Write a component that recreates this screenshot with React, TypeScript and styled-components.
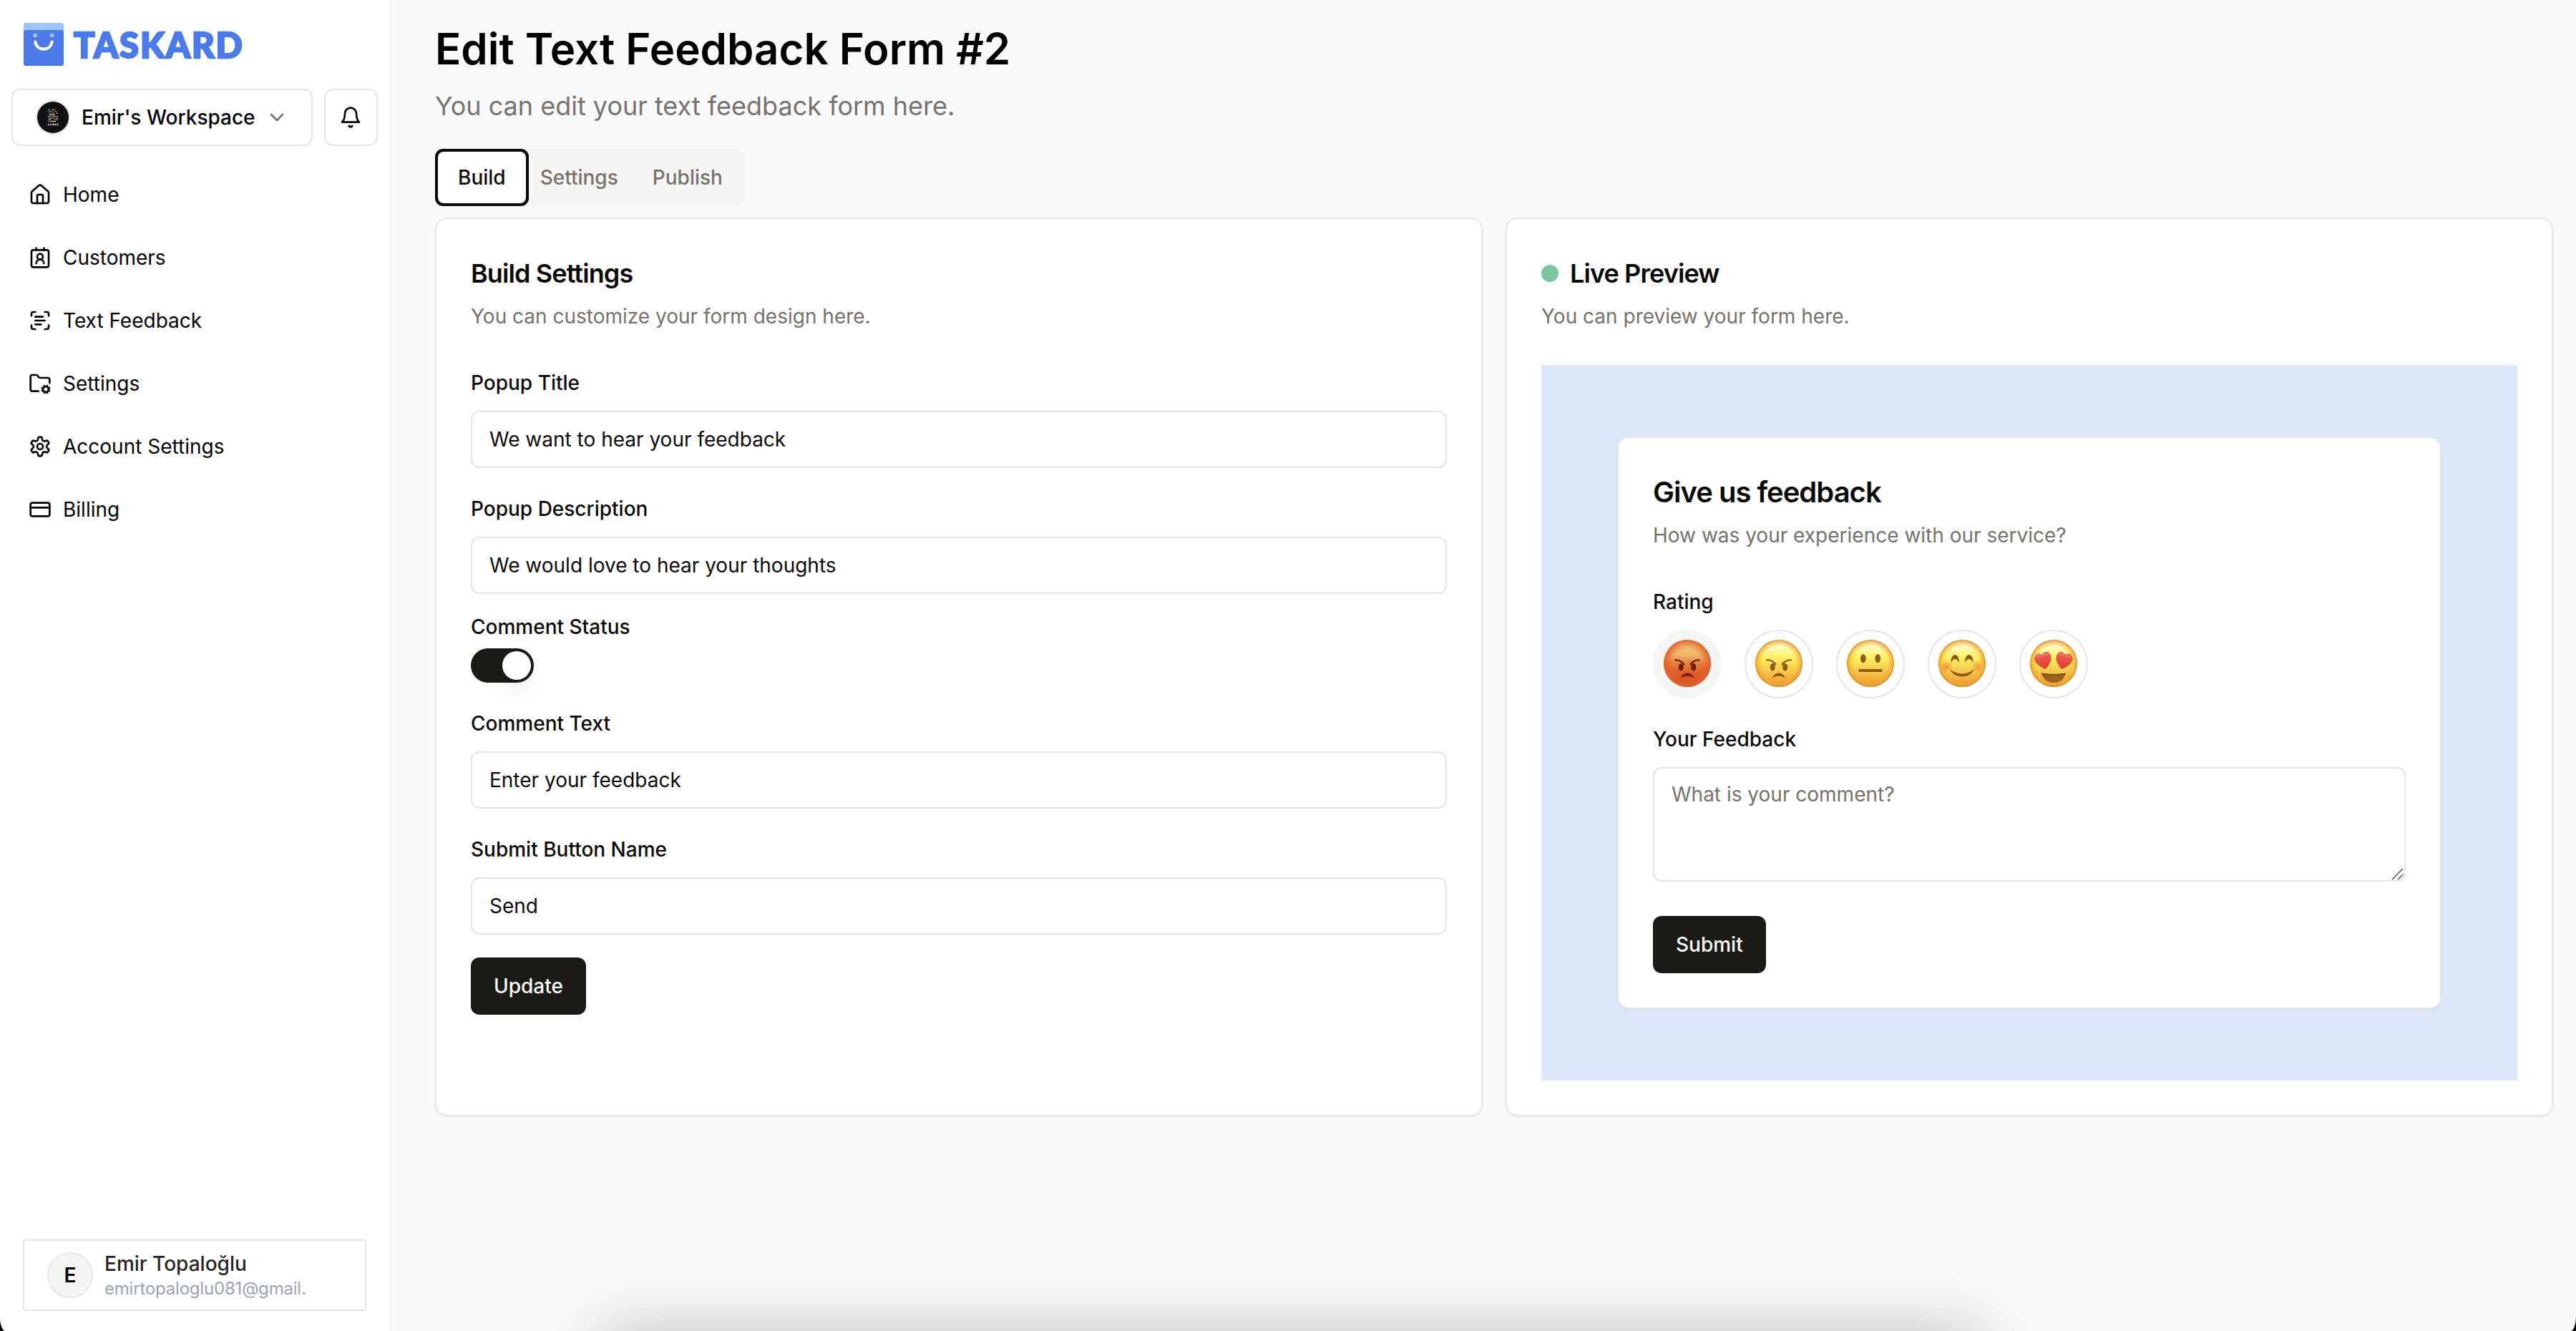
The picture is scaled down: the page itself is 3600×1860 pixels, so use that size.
import React, { useState } from "react";
import styled, { createGlobalStyle, css } from "styled-components";
import { ChevronDown, CreditCard, FolderCog, House, ScanText } from "lucide-react";

const GlobalStyle = createGlobalStyle`
  * {
    box-sizing: border-box;
  }

  body {
    margin: 0;
    background: #000;
    font-family: Inter, "Liberation Sans", sans-serif;
    color: #0c0a09;
  }

  h1, h2, p {
    margin: 0;
  }

  button, input, textarea {
    font-family: inherit;
  }
`;

const Page = styled.div`
  position: relative;
  display: flex;
  height: 1860px;
  overflow: hidden;
  background: #f9fafc;
  border-radius: 0 0 8px 8px / 0 0 20px 20px;
`;

/* Sidebar */

const Sidebar = styled.aside`
  display: flex;
  flex-direction: column;
  width: 546px;
  padding: 32px 16px 28px;
  background: #fff;
  border-right: 2px solid #f3f4f6;
`;

const Logo = styled.div`
  display: flex;
  align-items: center;
  gap: 14px;
  height: 60px;
  padding-left: 17px;
`;

const LogoName = styled.span`
  font-family: Lato, sans-serif;
  font-size: 49px;
  font-weight: 900;
  line-height: 60px;
  letter-spacing: 1.8px;
  color: #4a7be8;
  -webkit-text-stroke: 2.4px #4a7be8;
`;

const WorkspaceRow = styled.div`
  display: flex;
  gap: 16px;
  margin-top: 32px;
`;

const outlined = css`
  display: flex;
  align-items: center;
  height: 80px;
  background: #fff;
  border: 2px solid #e5e5e5;
  border-radius: 12px;
`;

const WorkspaceButton = styled.button`
  ${outlined}
  width: 421px;
  padding: 0 32px;
  font-size: 28px;
  font-weight: 500;
  color: #000;

  & > svg:last-child {
    margin-left: 14px;
    color: #6b7280;
  }
`;

const WorkspaceAvatar = styled.svg`
  width: 48px;
  height: 48px;
  margin-right: 16px;
  flex-shrink: 0;
`;

const BellButton = styled.button`
  ${outlined}
  justify-content: center;
  width: 75px;
  padding: 0 1px 0 0;
  color: #000;
`;

const Nav = styled.nav`
  display: flex;
  flex-direction: column;
  gap: 8px;
  margin-top: 28px;
`;

const NavItem = styled.a`
  display: flex;
  align-items: center;
  gap: 16px;
  height: 80px;
  padding-left: 24px;
  font-size: 28px;
  color: #000;
`;

const UserCard = styled.div`
  display: flex;
  align-items: center;
  gap: 16px;
  height: 100px;
  margin: auto 16px 0;
  padding-left: 32px;
  border: 2px solid #e5e5e5;
  border-radius: 4px;
`;

const UserInitial = styled.div`
  display: flex;
  align-items: center;
  justify-content: center;
  width: 64px;
  height: 64px;
  border: 2px solid #e5e7eb;
  border-radius: 50%;
  background: #f5f5f4;
  font-size: 28px;
  font-weight: 600;
  color: #000;
`;

const UserName = styled.p`
  font-size: 28px;
  font-weight: 500;
  line-height: 36px;
  color: #292524;
`;

const UserMail = styled.p`
  padding-top: 1px;
  font-size: 24px;
  line-height: 32px;
  letter-spacing: -0.2px;
  color: #9ca3af;
`;

/* Main column */

const Main = styled.main`
  flex: 1;
  padding: 32px 32px 0 62px;
`;

const Title = styled.h1`
  font-size: 60px;
  font-weight: 600;
  line-height: 72px;
  color: #000;
`;

const Subtitle = styled.p`
  margin-top: 16px;
  font-size: 36px;
  line-height: 56px;
  color: #78716c;
`;

const Tabs = styled.div`
  display: inline-flex;
  height: 80px;
  margin-top: 32px;
  padding: 8px;
  border-radius: 12px;
  background: #f5f5f4;
`;

const Tab = styled.button<{ $active: boolean }>`
  padding: 0 24px;
  border: none;
  border-radius: 4px;
  background: ${({ $active }) => ($active ? "#fff" : "transparent")};
  color: ${({ $active }) => ($active ? "#0c0a09" : "#78716c")};
  font-size: 28px;
  font-weight: 500;
  box-shadow: ${({ $active }) => ($active ? "0 0 0 4px #fff, 0 0 0 8px #0c0a09" : "none")};
`;

const Panels = styled.div`
  display: grid;
  grid-template-columns: 1fr 1fr;
  gap: 32px;
  margin-top: 16px;
`;

const Card = styled.section`
  height: 1256px;
  padding: 48px;
  border: 2px solid #e5e5e5;
  border-radius: 16px;
  background: #fff;
  box-shadow: 0 2px 4px rgba(0, 0, 0, 0.05);
`;

const PopupCard = styled(Card)`
  width: 1152px;
  height: 800px;
`;

const CardTitle = styled.h2<{ $large?: boolean }>`
  display: flex;
  align-items: center;
  gap: 16px;
  font-size: ${({ $large }) => ($large ? "40px" : "36px")};
  font-weight: 600;
  line-height: 56px;
  letter-spacing: -0.025em;
`;

const LiveDot = styled.span`
  width: 24px;
  height: 24px;
  border-radius: 50%;
  background: #7dc4a0;
`;

const CardText = styled.p`
  margin-top: 12px;
  font-size: 28px;
  line-height: 40px;
  color: #78716c;
`;

const Form = styled.form`
  display: flex;
  flex-direction: column;
  align-items: flex-start;
  margin-top: 16px;
`;

const Field = styled.div<{ $tight?: boolean }>`
  display: flex;
  flex-direction: column;
  align-items: flex-start;
  gap: ${({ $tight }) => ($tight ? "16px" : "25px")};
  width: 100%;
  margin-top: ${({ $tight }) => ($tight ? "32px" : "43px")};
`;

const Label = styled.label`
  font-size: 28px;
  font-weight: 500;
  line-height: 28px;
`;

const Input = styled.input`
  width: 100%;
  height: 80px;
  padding: 0 24px;
  border: 2px solid #e5e5e5;
  border-radius: 12px;
  background: #fff;
  font-size: 28px;
  color: #0c0a09;
  outline: none;
`;

const Switch = styled.button`
  display: flex;
  justify-content: flex-end;
  width: 88px;
  height: 48px;
  padding: 4px;
  border: none;
  border-radius: 24px;
  background: #1b1a17;
`;

const SwitchThumb = styled.span`
  width: 40px;
  height: 40px;
  border-radius: 50%;
  background: #fff;
  box-shadow: 0 20px 30px -6px rgba(0, 0, 0, 0.1), 0 8px 12px -8px rgba(0, 0, 0, 0.1);
`;

const PrimaryButton = styled.button<{ $gap: number }>`
  height: 80px;
  margin-top: ${({ $gap }) => $gap}px;
  padding: 0 32px;
  border: none;
  border-radius: 12px;
  background: #1b1a17;
  font-size: 28px;
  font-weight: 500;
  color: #fafaf9;
`;

const PreviewArea = styled.div`
  display: flex;
  align-items: center;
  justify-content: center;
  height: 1000px;
  margin-top: 48px;
  background: #dde8fb;
`;

const Ratings = styled.div`
  display: flex;
  gap: 32px;
`;

const RatingButton = styled.button<{ $selected: boolean }>`
  display: flex;
  align-items: center;
  justify-content: center;
  width: 96px;
  height: 96px;
  padding: 0 0 2px;
  border: 2px solid ${({ $selected }) => ($selected ? "#f5f5f4" : "#e5e5e5")};
  border-radius: 50%;
  background: ${({ $selected }) => ($selected ? "#f5f5f4" : "#fff")};
`;

const CommentBox = styled.div`
  position: relative;
  width: 100%;
  height: 160px;
`;

const Textarea = styled.textarea`
  display: block;
  width: 100%;
  height: 160px;
  padding: 16px 24px;
  border: 2px solid #e5e5e5;
  border-radius: 12px;
  font-size: 28px;
  line-height: 40px;
  resize: none;
  outline: none;

  &::placeholder {
    color: #78716c;
    opacity: 1;
  }
`;

const ResizeGrip = styled.svg`
  position: absolute;
  right: 3px;
  bottom: 2px;
`;

const DockShadow = styled.div`
  position: absolute;
  top: 1860px;
  left: 838px;
  width: 1933px;
  height: 400px;
  box-shadow: 0 0 90px rgba(0, 0, 0, 0.23);
`;

const HiddenDefs = styled.svg`
  position: absolute;
  width: 0;
  height: 0;
`;

/* Icons */

const Outline = ({ children }: { children: React.ReactNode }) => (
  <svg
    width="32"
    height="32"
    viewBox="0 0 24 24"
    fill="none"
    stroke="currentColor"
    strokeWidth="2"
    strokeLinecap="round"
    strokeLinejoin="round"
  >
    {children}
  </svg>
);

const BellIcon = () => (
  <Outline>
    <path d="M6 8a6 6 0 0 1 12 0c0 7 3 9 3 9H3s3-2 3-9" />
    <path d="M10.3 21a1.94 1.94 0 0 0 3.4 0" />
  </Outline>
);

const ContactIcon = () => (
  <Outline>
    <path d="M16 18a4 4 0 0 0-8 0" />
    <circle cx="12" cy="11" r="3" />
    <rect width="18" height="18" x="3" y="4" rx="2" />
    <path d="M8 2v2M16 2v2" />
  </Outline>
);

const GearIcon = () => (
  <Outline>
    <path d="M12.22 2h-.44a2 2 0 0 0-2 2v.18a2 2 0 0 1-1 1.73l-.43.25a2 2 0 0 1-2 0l-.15-.08a2 2 0 0 0-2.73.73l-.22.38a2 2 0 0 0 .73 2.73l.15.1a2 2 0 0 1 1 1.72v.51a2 2 0 0 1-1 1.74l-.15.09a2 2 0 0 0-.73 2.73l.22.38a2 2 0 0 0 2.73.73l.15-.08a2 2 0 0 1 2 0l.43.25a2 2 0 0 1 1 1.73V20a2 2 0 0 0 2 2h.44a2 2 0 0 0 2-2v-.18a2 2 0 0 1 1-1.73l.43-.25a2 2 0 0 1 2 0l.15.08a2 2 0 0 0 2.73-.73l.22-.39a2 2 0 0 0-.73-2.73l-.15-.08a2 2 0 0 1-1-1.74v-.5a2 2 0 0 1 1-1.74l.15-.09a2 2 0 0 0 .73-2.73l-.22-.38a2 2 0 0 0-2.73-.73l-.15.08a2 2 0 0 1-2 0l-.43-.25a2 2 0 0 1-1-1.73V4a2 2 0 0 0-2-2z" />
    <circle cx="12" cy="12" r="3" />
  </Outline>
);

const LogoMark = () => (
  <svg width="56" height="60" viewBox="0 0 56 60" fill="none">
    <rect width="56" height="20" rx="3" fill="#9dc5f9" />
    <rect y="10" width="56" height="50" rx="3" fill="#4a7be8" />
    <circle cx="16.2" cy="17.3" r="2.9" fill="#9dc5f9" />
    <circle cx="39.6" cy="17.3" r="2.9" fill="#9dc5f9" />
    <path d="M16.4 26.5C17.5 33 22 36.6 28 36.6S38.5 33 39.6 26.5" stroke="#fff" strokeWidth="4.2" strokeLinecap="round" />
  </svg>
);

// x, y, width, colour of each line of code in the workspace picture
const codeLines: [number, number, number, string][] = [
  [17, 13, 3, "#3f9fd0"],
  [22, 13, 5, "#d06a6a"],
  [17, 15.3, 7, "#3aa55a"],
  [26, 15.3, 3, "#b8862d"],
  [18, 18, 3, "#e0559a"],
  [22, 18, 4, "#9a6cf0"],
  [28, 18, 3, "#4cc3f0"],
  [19, 20.3, 8, "#f0d84c"],
  [17, 22.6, 4, "#5ad07a"],
  [22, 22.6, 6, "#f07a5a"],
  [28.5, 22.6, 3, "#5ad07a"],
  [17, 25, 10, "#4c9ff0"],
  [28, 25, 3, "#c07af0"],
  [18, 27.2, 3, "#f0d84c"],
  [26, 27.2, 5, "#f06a6a"],
  [17, 29.4, 3, "#9a6cf0"],
  [21, 29.4, 7, "#f0e86c"],
];

const WorkspacePicture = () => (
  <WorkspaceAvatar viewBox="0 0 48 48">
    <circle cx="24" cy="24" r="24" fill="#e5e7eb" />
    <circle cx="24" cy="24" r="22" fill="#111" />
    {codeLines.map(([x, y, width, fill]) => (
      <rect key={`${x}-${y}`} x={x} y={y - 0.5} width={width} height="1.2" fill={fill} />
    ))}
    <path d="M18 32q-1 2 0 4M20 33l2 2m0-2l-2 2M24 33h1.5v2h-1.5zM27 33l2 2m0-2l-2 2M30.5 32q1 2 0 4" stroke="#eee" strokeWidth="0.9" fill="none" />
  </WorkspaceAvatar>
);

/* Rating faces */

type Mood = "furious" | "angry" | "neutral" | "happy" | "love";

const moods: Mood[] = ["furious", "angry", "neutral", "happy", "love"];

const AngryFeatures = ({ color }: { color: string }) => (
  <g fill={color}>
    <path d="M16 28.5Q23 27.5 28.5 34.5M50 28.5Q43 27.5 37.5 34.5" stroke={color} strokeWidth="2.2" fill="none" strokeLinecap="round" />
    <ellipse cx="24.3" cy="38.3" rx="3.5" ry="5.2" />
    <ellipse cx="41.7" cy="38.3" rx="3.5" ry="5.2" />
    <path d="M24 53.5Q26.5 46.6 33 46.6T42 53.5Q38.5 50.8 33 50.8T24 53.5Z" />
  </g>
);

const Heart = ({ transform }: { transform: string }) => (
  <path
    transform={transform}
    d="M0 11.5C-5 7.5-11 2.5-11-4C-11-8-8.5-11-5.3-11C-2.8-11-.9-9.5 0-7C.9-9.5 2.8-11 5.3-11C8.5-11 11-8 11-4C11 2.5 5 7.5 0 11.5Z"
    fill="url(#heart)"
    stroke="#c9332a"
    strokeWidth="0.8"
  />
);

const features: Record<Mood, React.ReactNode> = {
  furious: <AngryFeatures color="#6b2208" />,
  angry: <AngryFeatures color="#8f5a17" />,
  neutral: (
    <g fill="#8f5a17">
      <ellipse cx="22.9" cy="26.2" rx="3.8" ry="6" />
      <ellipse cx="43.2" cy="26.2" rx="3.8" ry="6" />
      <rect x="16.3" y="41" width="33.4" height="4" rx="1.5" />
    </g>
  ),
  happy: (
    <>
      <circle cx="11" cy="38" r="9" fill="url(#blush)" />
      <circle cx="55" cy="38" r="9" fill="url(#blush)" />
      <g fill="#8f5a17">
        <path d="M17.5 32.5C17.5 25 20 21 23.2 21S29 25 29 32.5Q26.5 27 23.2 27T17.5 32.5Z" />
        <path d="M37 32.5C37 25 39.6 21 42.8 21S48.5 25 48.5 32.5Q46 27 42.8 27T37 32.5Z" />
        <path d="M16 41Q24 47.5 33 47.5T50 41Q45 51.5 33 51.5T16 41Z" />
      </g>
    </>
  ),
  love: (
    <>
      <path d="M15.8 46.5Q33 49.5 50 46.5Q46.5 60 33 60T15.8 46.5Z" fill="#9a661c" />
      <path d="M15.8 46.5Q33 49.5 50 46.5L49.5 48.5Q33 51.5 16.3 48.5Z" fill="#7d4c12" />
      <Heart transform="translate(19 29.5) rotate(-15)" />
      <Heart transform="translate(47 29.5) rotate(15)" />
    </>
  ),
};

const Face = ({ mood }: { mood: Mood }) => (
  <svg width="66" height="66" viewBox="0 0 66 66">
    <circle cx="33" cy="33" r="33" fill={mood === "furious" ? "url(#redFace)" : "url(#yellowFace)"} />
    <circle cx="33" cy="33" r="33" fill={mood === "furious" ? "url(#redRim)" : "url(#yellowRim)"} />
    {features[mood]}
  </svg>
);

const FaceGradients = () => (
  <HiddenDefs>
    <defs>
      <linearGradient id="yellowFace" x1="0" y1="0" x2="0" y2="1">
        <stop offset="0.03" stopColor="#fff8cf" />
        <stop offset="0.15" stopColor="#fffbc0" />
        <stop offset="0.36" stopColor="#fdf263" />
        <stop offset="0.6" stopColor="#f8d250" />
        <stop offset="0.85" stopColor="#f2ac3c" />
        <stop offset="1" stopColor="#e39332" />
      </linearGradient>
      <radialGradient id="yellowRim" cx="0.5" cy="0.5" r="0.5">
        <stop offset="0.72" stopColor="#f0a22c" stopOpacity="0" />
        <stop offset="0.9" stopColor="#f2a92e" stopOpacity="0.6" />
        <stop offset="1" stopColor="#dc8730" />
      </radialGradient>
      <linearGradient id="redFace" x1="0" y1="0" x2="0" y2="1">
        <stop offset="0.05" stopColor="#f5cf7c" />
        <stop offset="0.33" stopColor="#f0b468" />
        <stop offset="0.48" stopColor="#e88442" />
        <stop offset="0.7" stopColor="#de5c2a" />
        <stop offset="1" stopColor="#d64a22" />
      </linearGradient>
      <radialGradient id="redRim" cx="0.5" cy="0.5" r="0.5">
        <stop offset="0.6" stopColor="#e2602a" stopOpacity="0" />
        <stop offset="0.9" stopColor="#e2602a" stopOpacity="0.75" />
        <stop offset="1" stopColor="#dc6232" />
      </radialGradient>
      <radialGradient id="blush">
        <stop offset="0" stopColor="#f08030" stopOpacity="0.75" />
        <stop offset="1" stopColor="#f08030" stopOpacity="0" />
      </radialGradient>
      <linearGradient id="heart" x1="0" y1="0" x2="0" y2="1">
        <stop offset="0" stopColor="#f58a86" />
        <stop offset="0.3" stopColor="#ee5149" />
        <stop offset="1" stopColor="#e5392f" />
      </linearGradient>
    </defs>
  </HiddenDefs>
);

const navItems = [
  { name: "Home", icon: <House size={32} /> },
  { name: "Customers", icon: <ContactIcon /> },
  { name: "Text Feedback", icon: <ScanText size={32} /> },
  { name: "Settings", icon: <FolderCog size={32} /> },
  { name: "Account Settings", icon: <GearIcon /> },
  { name: "Billing", icon: <CreditCard size={32} /> },
];

const tabs = ["Build", "Settings", "Publish"];

export default function App() {
  const [activeTab, setActiveTab] = useState("Build");
  const [rating, setRating] = useState<Mood>("furious");

  return (
    <Page>
      <GlobalStyle />
      <FaceGradients />

      <Sidebar>
        <Logo>
          <LogoMark />
          <LogoName>TASKARD</LogoName>
        </Logo>
        <WorkspaceRow>
          <WorkspaceButton>
            <WorkspacePicture />
            Emir's Workspace
            <ChevronDown size={32} />
          </WorkspaceButton>
          <BellButton>
            <BellIcon />
          </BellButton>
        </WorkspaceRow>
        <Nav>
          {navItems.map((item) => (
            <NavItem key={item.name}>
              {item.icon}
              {item.name}
            </NavItem>
          ))}
        </Nav>
        <UserCard>
          <UserInitial>E</UserInitial>
          <div>
            <UserName>Emir Topaloğlu</UserName>
            <UserMail>emirtopaloglu081@gmail.</UserMail>
          </div>
        </UserCard>
      </Sidebar>

      <Main>
        <Title>Edit Text Feedback Form #2</Title>
        <Subtitle>You can edit your text feedback form here.</Subtitle>
        <Tabs>
          {tabs.map((tab) => (
            <Tab key={tab} $active={tab === activeTab} onClick={() => setActiveTab(tab)}>
              {tab}
            </Tab>
          ))}
        </Tabs>

        <Panels>
          <Card>
            <CardTitle>Build Settings</CardTitle>
            <CardText>You can customize your form design here.</CardText>
            <Form>
              <Field>
                <Label>Popup Title</Label>
                <Input defaultValue="We want to hear your feedback" />
              </Field>
              <Field>
                <Label>Popup Description</Label>
                <Input defaultValue="We would love to hear your thoughts" />
              </Field>
              <Field $tight>
                <Label>Comment Status</Label>
                <Switch type="button">
                  <SwitchThumb />
                </Switch>
              </Field>
              <Field>
                <Label>Comment Text</Label>
                <Input defaultValue="Enter your feedback" />
              </Field>
              <Field>
                <Label>Submit Button Name</Label>
                <Input defaultValue="Send" />
              </Field>
              <PrimaryButton type="button" $gap={32}>
                Update
              </PrimaryButton>
            </Form>
          </Card>

          <Card>
            <CardTitle>
              <LiveDot />
              Live Preview
            </CardTitle>
            <CardText>You can preview your form here.</CardText>
            <PreviewArea>
              <PopupCard>
                <CardTitle $large>Give us feedback</CardTitle>
                <CardText>How was your experience with our service?</CardText>
                <Form>
                  <Field>
                    <Label>Rating</Label>
                    <Ratings>
                      {moods.map((mood) => (
                        <RatingButton
                          key={mood}
                          type="button"
                          $selected={mood === rating}
                          onClick={() => setRating(mood)}
                        >
                          <Face mood={mood} />
                        </RatingButton>
                      ))}
                    </Ratings>
                  </Field>
                  <Field>
                    <Label>Your Feedback</Label>
                    <CommentBox>
                      <Textarea placeholder="What is your comment?" />
                      <ResizeGrip width="17" height="17" viewBox="0 0 17 17" stroke="#555" strokeWidth="1.5">
                        <path d="M1 16L16 1M9 16L16 9" />
                      </ResizeGrip>
                    </CommentBox>
                  </Field>
                  <PrimaryButton type="button" $gap={48}>
                    Submit
                  </PrimaryButton>
                </Form>
              </PopupCard>
            </PreviewArea>
          </Card>
        </Panels>
      </Main>

      <DockShadow />
    </Page>
  );
}
